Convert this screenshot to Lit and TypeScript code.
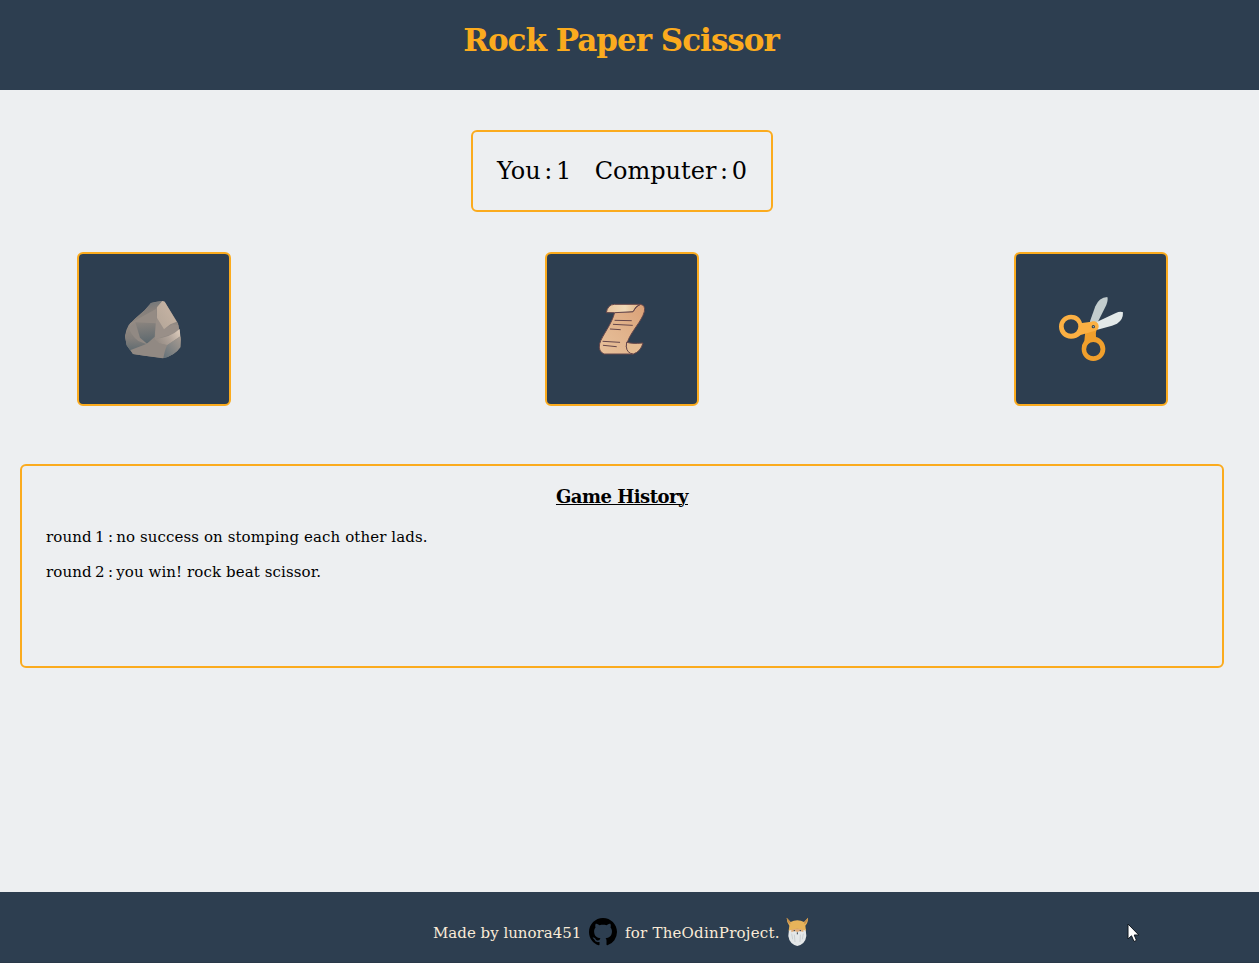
import { LitElement, html, css, svg } from "lit";
import { customElement, state } from "lit/decorators.js";

const rock = svg`
  <defs>
    <linearGradient id="r1" x1="0" y1="0" x2=".3" y2="1"><stop offset="0" stop-color="#66727a"/><stop offset=".5" stop-color="#857f7b"/><stop offset="1" stop-color="#90887f"/></linearGradient>
    <linearGradient id="r2" x1="1" y1="0" x2="0" y2="1"><stop offset="0" stop-color="#cbb7a6"/><stop offset="1" stop-color="#b3a598"/></linearGradient>
    <linearGradient id="r3" x1=".4" y1="0" x2=".5" y2="1"><stop offset="0" stop-color="#89837e"/><stop offset="1" stop-color="#5c686e"/></linearGradient>
    <linearGradient id="r4" x1=".3" y1="0" x2=".3" y2="1"><stop offset="0" stop-color="#91887f"/><stop offset=".5" stop-color="#827e7b"/><stop offset="1" stop-color="#5f6b70"/></linearGradient>
    <linearGradient id="r5" x1="0" y1=".6" x2="1" y2=".2"><stop offset="0" stop-color="#948b84"/><stop offset=".5" stop-color="#b0a399"/><stop offset="1" stop-color="#dccbbb"/></linearGradient>
    <linearGradient id="r6" x1="1" y1="0" x2=".1" y2="1"><stop offset="0" stop-color="#a89c92"/><stop offset="1" stop-color="#67737a"/></linearGradient>
  </defs>
  <path fill="#918983" d="M123 39Q138 34 157 33L164 35L204 100L210 137L213 148L211 172Q194 197 158 205L104 197L69 192L50 166L45 139Q47 120 56 105L75 86L104 61Z"/>
  <path fill="url(#r1)" d="M123 39L157 33L139 54L139 75L60 102L75 86L104 61Z"/>
  <path fill="#948b84" d="M60 100L139 56L140 84L162 117L135 148L137 102L76 98L57 112Z"/>
  <path fill="#998f88" d="M141 84L162 117L188 103L205 104L209 125L135 148L137 100Z"/>
  <path fill="url(#r2)" d="M141 52L157 33L164 35L200 95L181 103L162 118L141 84Z"/>
  <path fill="url(#r3)" d="M76 97L137 100L134 140L111 161L90 143Z"/>
  <path fill="url(#r4)" d="M56 109Q60 134 85 153L109 162L106 166L62 183L50 166L45 139Z"/>
  <path fill="url(#r5)" d="M133 147Q181 143 209 117L211 139L172 165L147 160Z"/>
  <path fill="#918983" d="M109 162L132 148L147 160L170 166L160 204L104 197L69 192L62 180Z"/>
  <path fill="url(#r6)" d="M172 165L212 139L211 172Q194 197 160 205Q164 180 172 165Z"/>`;

const scroll = svg`
  <defs>
    <linearGradient id="s1" x1="1" y1="0" x2="0" y2="1"><stop offset="0" stop-color="#daa076"/><stop offset=".5" stop-color="#e1b38c"/><stop offset="1" stop-color="#e8c19b"/></linearGradient>
    <linearGradient id="s2" x1="0" y1="0" x2="1" y2="0"><stop offset="0" stop-color="#e9c59e"/><stop offset=".55" stop-color="#f0d9b7"/><stop offset="1" stop-color="#dfb081"/></linearGradient>
  </defs>
  <g stroke="#65464a" stroke-width="3" stroke-linejoin="round" stroke-linecap="round">
    <path fill="url(#s1)" d="M104 67L159 65Q168 48 181 43Q197 45 193 65C186 93 151 127 142 157L139 170Q144 190 159 192L72 192Q54 184 59 161C66 136 96 103 104 67Z"/>
    <path fill="url(#s2)" d="M79 67Q83 44 103 43L181 43Q166 48 159 65L105 68Z"/>
    <path fill="#e5bd93" d="M141 157Q153 162 189 159Q182 185 160 192Q140 190 139 170Z"/>
    <path fill="none" stroke-width="3" d="M105 91L154 92M100 103L157 106M91 117L121 119M69 154L119 157M70 166L109 170"/>
  </g>`;

const scissors = svg`
  <path fill="#c3cdce" d="M135 109L151 64Q162 37 187 36Q190 43 184 60L157 114L143 126Z"/>
  <path fill="#e3e9e9" d="M155 111L211 85Q226 78 234 82Q235 105 216 116L201 122L157 134Z"/>
  <path fill="#f09f2c" fill-rule="evenodd" d="M121 139L155 133Q151 145 153 156C168 159 181 174 181 192C181 212 165 228 145 228C125 228 110 212 110 192Q110 177 118 167ZM145 171A21.500 21.500 0 1 0 145 214A21.500 21.500 0 1 0 145 171Z"/>
  <path fill="#fbb043" fill-rule="evenodd" d="M111 114L139 110C152 105 162 114 161 126Q159 136 148 138L107 150Q96 161 78 161C58 161 42 145 42 125C42 105 58 89 78 89C95 89 108 99 111 114ZM78 102.500A22 22 0 1 0 78 146.500A22 22 0 1 0 78 102.500Z"/>
  <circle cx="145" cy="125" r="5" fill="#334454"/><circle cx="145" cy="125" r="1.700" fill="#c3cdce"/>`;

@customElement("app-root")
export class AppRoot extends LitElement {
  @state() private rounds = [
    { label: "round 1 :", text: "no success on stomping each other lads." },
    { label: "round 2 :", text: "you win! rock beat scissor." },
  ];

  static styles = css`
    :host { display: flex; flex-direction: column; height: 963px; position: relative; overflow: hidden;
      background: #edeff1; color: #000; font-family: "DejaVu Serif", serif; }
    * { box-sizing: border-box; }
    h1, h2, p { margin: 0; white-space: nowrap; }
    header { height: 90px; padding: 21px 17px 0 0; background: #2d3e50; flex: none; text-align: center; }
    h1 { font-size: 31px; line-height: 38px; color: #fbab1e; letter-spacing: -1px; }
    main { flex: 1; display: flex; flex-direction: column; padding: 40px 35px 0 20px; }
    .score { width: 302px; height: 82px; align-self: center; border: 2px solid #fbab1e; border-radius: 6px;
      display: flex; justify-content: space-between; padding: 22px 24px; font-size: 24px; line-height: 34px; white-space: nowrap; word-spacing: -4px; }
    .choices { display: grid; grid-template-columns: 468px 469px 154px; margin-top: 40px; padding-left: 57px; }
    button { width: 154px; height: 154px; padding: 0; border: 2px solid #fbab1e; border-radius: 6px; background: #2d3e50; }
    svg { display: block; flex: none; }
    .history { height: 204px; margin-top: 58px; border: 2px solid #fbab1e; border-radius: 6px; padding: 19px 24px; }
    h2 { font-size: 18px; line-height: 24px; text-align: center; letter-spacing: -.5px; text-decoration: underline; text-decoration-thickness: 1px; }
    .rounds { display: flex; flex-direction: column; gap: 15px; margin-top: 18px; }
    .round { font-size: 15px; line-height: 20px; display: flex; gap: 3px; letter-spacing: .1px; }
    .label { word-spacing: -1.500px; }
    footer { height: 71px; flex: none; background: #2d3e50; border-bottom: 1px solid #293848; color: #faebd7; display: flex; padding: 25px 0 0 433px; font-size: 15px; line-height: 30px; white-space: nowrap; }
    .made { width: 156px; padding-top: 1px; }
    .github { margin-top: 1px; }
    .project { width: 169px; padding: 1px 0 0 8px; letter-spacing: .22px; }
    .cursor { position: absolute; left: 1127px; top: 923px; }
  `;

  render() {
    return html`
      <header><h1><span>Rock Paper Scissor</span></h1></header>
      <main>
        <section class="score"><span class="you">You : 1</span><span class="computer">Computer : 0</span></section>
        <section class="choices">
          <button aria-label="Rock"><svg width="150" height="150" viewBox="-93 -108 450 450">${rock}</svg></button>
          <button aria-label="Paper"><svg width="150" height="150" viewBox="-99 -108 450 450">${scroll}</svg></button>
          <button aria-label="Scissor"><svg width="150" height="150" viewBox="-87 -93 450 450">${scissors}</svg></button>
        </section>
        <section class="history">
          <h2>Game History</h2>
          <div class="rounds">${this.rounds.map((r) => html`<p class="round"><span class="label">${r.label}</span><span class="text">${r.text}</span></p>`)}</div>
        </section>
      </main>
      <footer>
        <span class="made">Made by lunora451</span>
        <svg class="github" width="28" height="28" viewBox="0 0 16 16"><path d="M8 0C3.580 0 0 3.580 0 8c0 3.540 2.290 6.530 5.470 7.590.4.070.55-.17.55-.38 0-.19-.01-.82-.01-1.490-2.010.37-2.530-.49-2.690-.94-.09-.23-.48-.94-.82-1.130-.28-.15-.68-.52-.01-.53.63-.01 1.080.58 1.230.82.72 1.210 1.870.87 2.330.66.07-.52.28-.87.51-1.070-1.780-.2-3.640-.89-3.640-3.950 0-.87.31-1.590.82-2.150-.08-.2-.36-1.020.08-2.120 0 0 .67-.21 2.200.82.64-.18 1.320-.27 2-.27s1.360.09 2 .27c1.530-1.040 2.200-.82 2.200-.82.44 1.100.16 1.920.08 2.120.51.56.82 1.270.82 2.150 0 3.070-1.870 3.750-3.650 3.950.29.25.54.73.54 1.480 0 1.070-.01 1.930-.01 2.200 0 .21.15.46.55.38A8.010 8.010 0 0 0 16 8c0-4.420-3.580-8-8-8Z"/></svg>
        <span class="project">for TheOdinProject.</span>
        <svg width="24" height="30" viewBox="-2 1 72 90">
          <path fill="#e4e7e8" d="M7 38L57 38L59 58Q56 82 32 88Q8 82 5 58Z"/>
          <path fill="#e0ac78" d="M14 35H51L50 46L40 43L32 46L24 43L14 47Z"/>
          <path fill="#e7b35a" d="M0 3L12 16Q21 11 32 11Q43 11 52 16L64 3Q65 17 56 27L58 42Q32 30 6 42L8 27Q0 17 0 3Z"/>
          <path fill="#c58d49" d="M0 3L11 16L11 23Q2 17 0 3ZM64 3L53 16L53 23Q62 17 64 3Z"/>
          <path fill="none" stroke="#bcc3c6" stroke-width="2" d="M15 51L18 68M23 54L25 76M41 54L40 76M50 51L47 68"/>
          <path fill="none" stroke="#34404a" stroke-width="3" d="M21 42h4M39 42h4M32 47v6"/>
        </svg>
      </footer>
      <svg class="cursor" width="13" height="20" viewBox="0 0 13 20"><path d="M1 1V16L4.500 12.800L7 18.500L9.500 17.400L7.200 12H11.800Z" fill="#fff" stroke="#111820" stroke-width="1"/></svg>
    `;
  }
}
